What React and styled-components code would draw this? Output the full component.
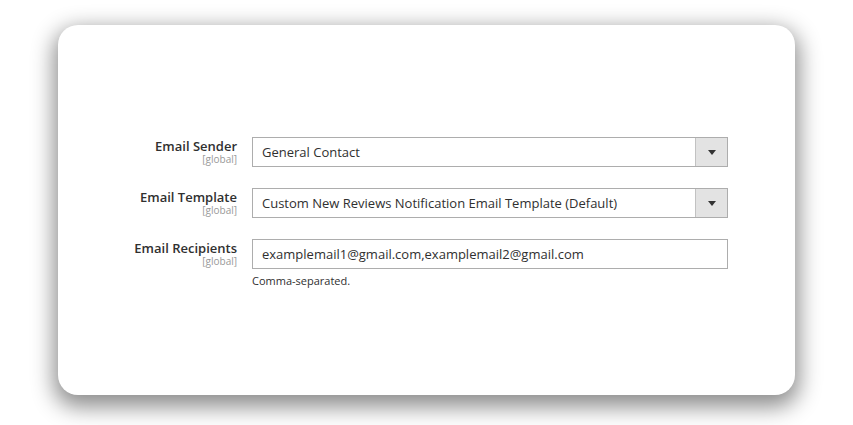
import React from "react";
import styled, { createGlobalStyle } from "styled-components";

const Global = createGlobalStyle`
  html, body { margin: 0; padding: 0; background: #ffffff; }
  body { font-family: "Open Sans", "Noto Sans", sans-serif; }
  * { box-sizing: border-box; }
`;

const Page = styled.div`
  width: 853px;
  height: 425px;
  padding: 25px 58px 0 58px;
  background: #ffffff;
`;

const Card = styled.div`
  width: 737px;
  height: 370px;
  background: #ffffff;
  border-radius: 20px;
  box-shadow: 0 8px 22px 4px rgba(0, 0, 0, 0.45);
  padding: 112px 0 0 0;
`;

const Form = styled.div`
  display: grid;
  grid-template-columns: 179px 476px;
  column-gap: 15px;
  row-gap: 21px;
`;

const LabelCell = styled.div`
  text-align: right;
  padding-top: 2px;
`;

const LabelText = styled.div`
  font-weight: 600;
  font-size: 13px;
  line-height: 14px;
  color: #303030;
`;

const Scope = styled.div`
  font-size: 10px;
  line-height: 12px;
  color: #999999;
`;

const Control = styled.div`
  display: flex;
  flex-direction: column;
`;

const Field = styled.div`
  height: 30px;
  border: 1px solid #adadad;
  display: flex;
  align-items: center;
  background: #ffffff;
`;

const Value = styled.div`
  flex: 1;
  padding-left: 9px;
  font-size: 13px;
  color: #303030;
  white-space: nowrap;
`;

const ArrowBox = styled.div`
  width: 32px;
  height: 100%;
  background: #e3e3e3;
  border-left: 1px solid #c2c2c2;
  display: flex;
  align-items: center;
  justify-content: center;
`;

const Note = styled.div`
  margin-top: 5px;
  font-size: 11px;
  line-height: 14px;
  color: #303030;
`;

const Arrow = () => (
  <svg width="8" height="5" viewBox="0 0 8 5">
    <path d="M0 0 H8 L4 5 Z" fill="#333333" />
  </svg>
);

const rows = [
  { label: "Email Sender", value: "General Contact", select: true },
  {
    label: "Email Template",
    value: "Custom New Reviews Notification Email Template (Default)",
    select: true,
  },
  {
    label: "Email Recipients",
    value: "examplemail1@gmail.com,examplemail2@gmail.com",
    note: "Comma-separated.",
  },
];

export default function App() {
  return (
    <>
      <Global />
      <Page>
        <Card>
          <Form>
            {rows.map((r) => (
              <React.Fragment key={r.label}>
                <LabelCell>
                  <LabelText>{r.label}</LabelText>
                  <Scope>[global]</Scope>
                </LabelCell>
                <Control>
                  <Field>
                    <Value>{r.value}</Value>
                    {r.select && (
                      <ArrowBox>
                        <Arrow />
                      </ArrowBox>
                    )}
                  </Field>
                  {r.note && <Note>{r.note}</Note>}
                </Control>
              </React.Fragment>
            ))}
          </Form>
        </Card>
      </Page>
    </>
  );
}
